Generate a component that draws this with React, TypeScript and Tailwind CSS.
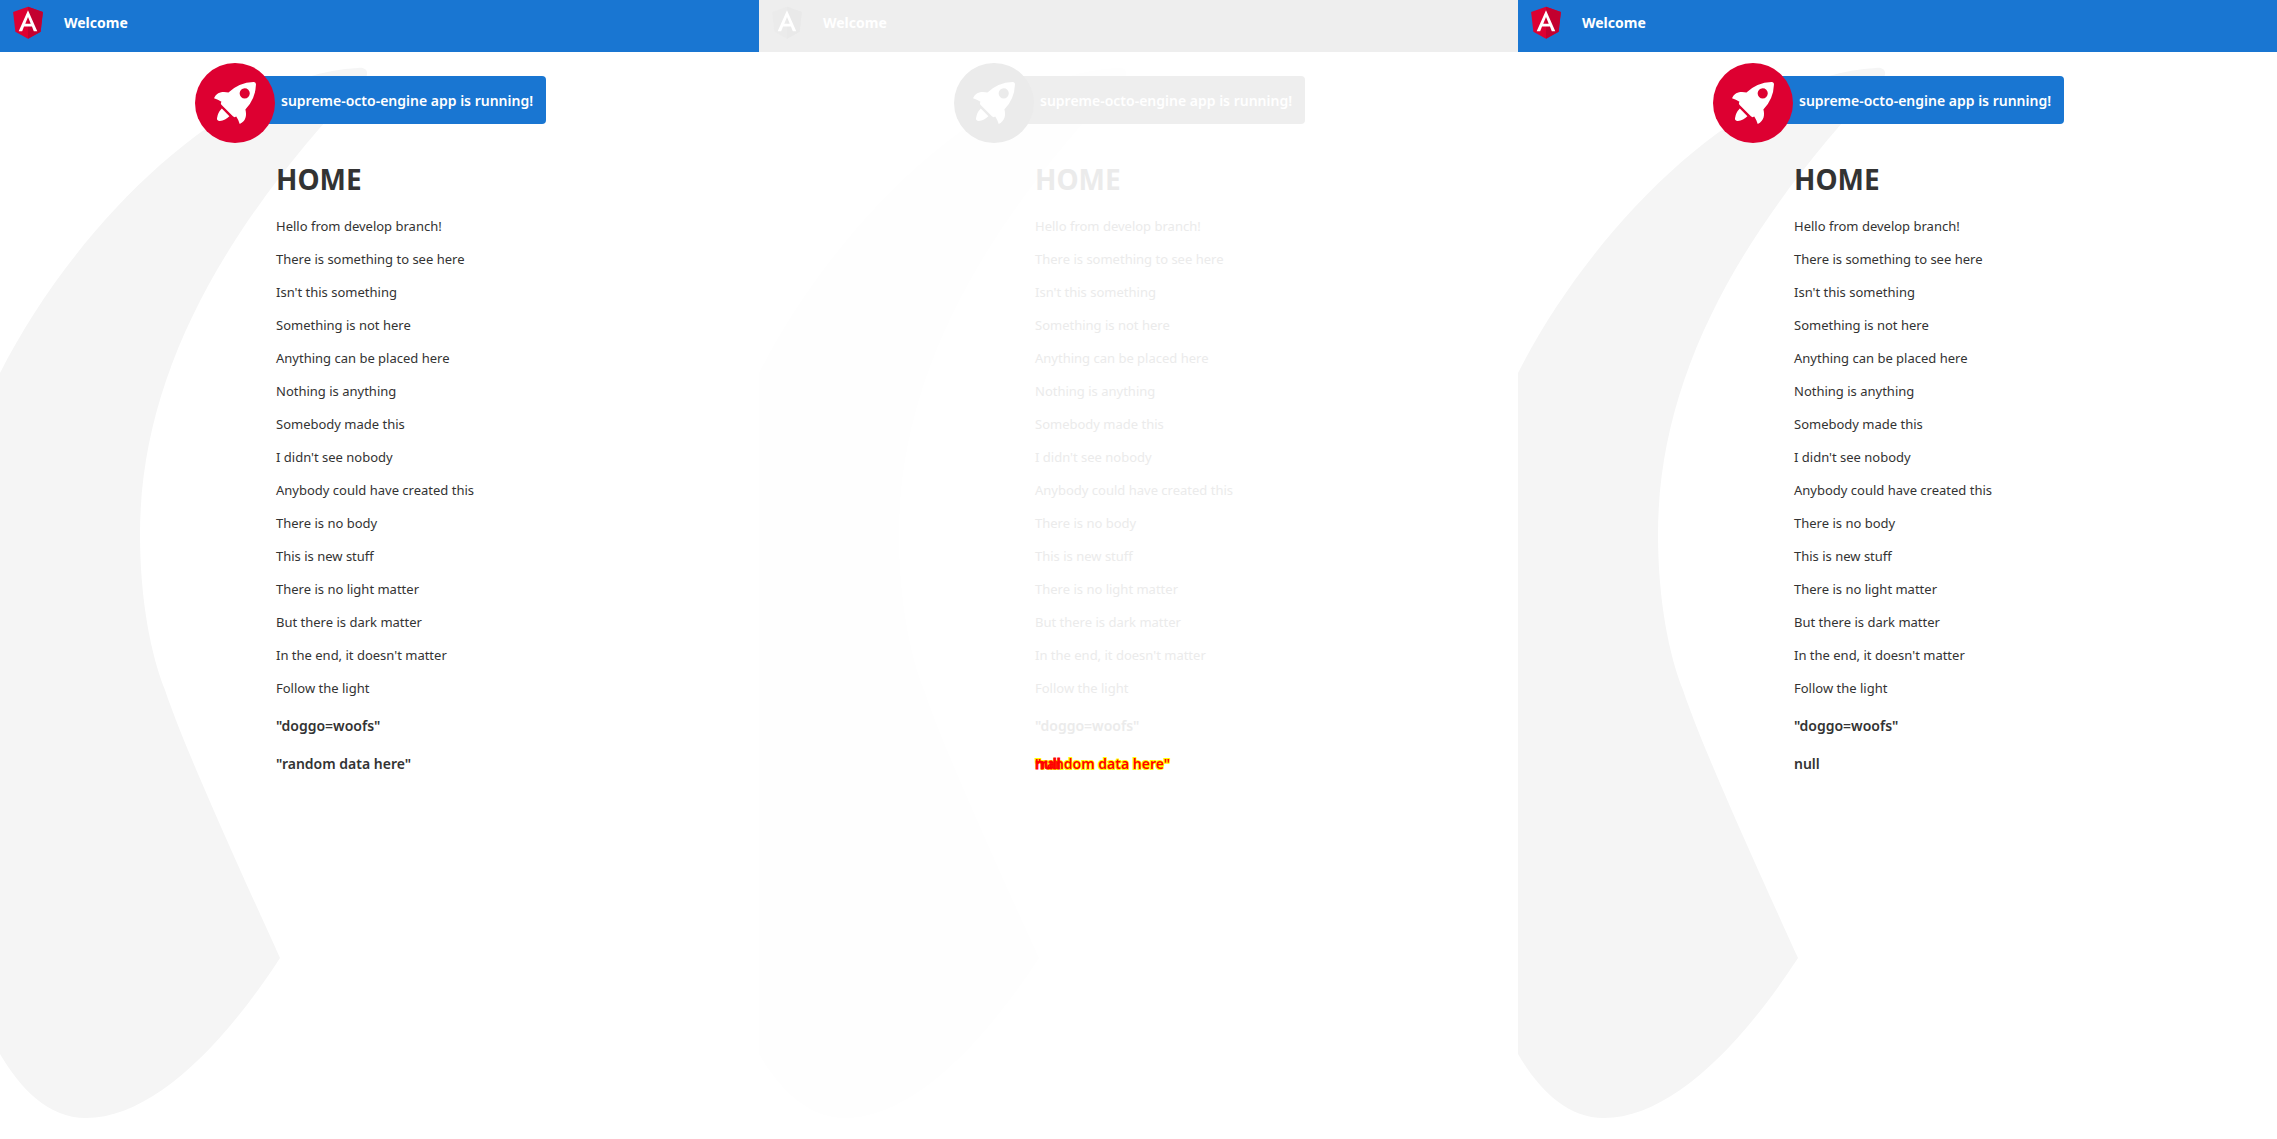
type Variant = "color" | "diff";

interface PanelProps {
  variant: Variant;
  lastValue?: string;
}

const lines = [
  "Hello from develop branch!",
  "There is something to see here",
  "Isn't this something",
  "Something is not here",
  "Anything can be placed here",
  "Nothing is anything",
  "Somebody made this",
  "I didn't see nobody",
  "Anybody could have created this",
  "There is no body",
  "This is new stuff",
  "There is no light matter",
  "But there is dark matter",
  "In the end, it doesn't matter",
  "Follow the light",
];

const palettes = {
  color: {
    bar: "bg-[#1976d2]",
    text: "text-[#333333]",
    smoke: "fill-[#f5f5f5]",
    circle: "fill-[#dd0031]",
    logoLeft: "fill-[#dd0031]",
    logoRight: "fill-[#c3002f]",
  },
  diff: {
    bar: "bg-[#eeeeee]",
    text: "text-[#ebebeb]",
    smoke: "fill-[#fefefe]",
    circle: "fill-[#ebebeb]",
    logoLeft: "fill-[#ebebeb]",
    logoRight: "fill-[#e9e9e9]",
  },
};

function Logo({ variant }: { variant: Variant }) {
  const p = palettes[variant];
  return (
    <svg viewBox="0 0 250 250" className="size-10" role="img" aria-label="Angular Logo">
      <path className={p.logoLeft} d="M125 30 31.9 63.2l14.2 123.1L125 230l78.9-43.7 14.2-123.1z" />
      <path className={p.logoRight} d="M125 30v200l78.9-43.7 14.2-123.1z" />
      <path
        fill="#fff"
        d="M125 52.1 66.8 182.6h21.7l11.7-29.2h49.4l11.7 29.2H183L125 52.1zm17 83.3h-34l17-40.9z"
      />
    </svg>
  );
}

function Rocket({ variant }: { variant: Variant }) {
  return (
    <svg viewBox="0 0 101.678 101.678" className="absolute -top-[13px] -left-[18px] size-20" aria-hidden="true">
      <circle cx="50.839" cy="50.839" r="50.839" className={palettes[variant].circle} />
      <g transform="translate(24.185 24.185)" fill="#fff">
        <path
          transform="translate(0.371 3.363)"
          d="M3.4,42.615a3.084,3.084,0,0,0,3.553,3.553,21.419,21.419,0,0,0,12.215-6.107L9.511,30.4A21.419,21.419,0,0,0,3.4,42.615Z"
        />
        <path d="M53.3,3.221A3.09,3.09,0,0,0,50.081,0,48.227,48.227,0,0,0,18.322,13.437c-6-1.666-14.991-1.221-18.322,7.218A33.892,33.892,0,0,1,9.439,25.1l-.333.666a3.013,3.013,0,0,0,.555,3.553L23.985,43.641a2.9,2.9,0,0,0,3.553.555l.666-.333A33.892,33.892,0,0,1,32.647,53.3c8.55-3.664,8.884-12.326,7.218-18.322A48.227,48.227,0,0,0,53.3,3.221ZM34.424,9.772a6.439,6.439,0,1,1,9.106,9.106,6.368,6.368,0,0,1-9.106,0A6.467,6.467,0,0,1,34.424,9.772Z" />
      </g>
    </svg>
  );
}

function Smoke({ variant }: { variant: Variant }) {
  return (
    <svg
      viewBox="0 0 370 1120"
      width="370"
      height="1120"
      className="pointer-events-none absolute top-0 left-0 -z-10"
      aria-hidden="true"
    >
      <path
        className={palettes[variant].smoke}
        d="M0 373C75 225 225 75 358 68C366 67 369 72 366 77C230 220 140 369 140 534C140 600 151 655 165 690C180 735 215 815 280 958C220 1050 150 1118 86 1118C48 1118 20 1088 0 1054Z"
      />
    </svg>
  );
}

function Panel({ variant, lastValue }: PanelProps) {
  const p = palettes[variant];
  return (
    <section className="relative isolate min-h-screen overflow-hidden">
      <Smoke variant={variant} />
      <header className={`flex h-[52px] items-start gap-4 px-2 pt-[2px] font-bold text-white ${p.bar}`}>
        <Logo variant={variant} />
        <span className="leading-[42px]">Welcome</span>
      </header>
      <main>
        <div
          className={`relative mx-auto mt-6 flex h-12 w-[333px] items-center rounded pl-[68px] font-semibold whitespace-nowrap text-white ${p.bar}`}
        >
          <Rocket variant={variant} />
          <span>supreme-octo-engine app is running!</span>
        </div>
        <div className={`mx-auto mt-9 w-[207px] whitespace-nowrap ${p.text}`}>
          <h1 className="text-[28px] leading-[38px] font-bold">HOME</h1>
          <div className="mt-[19px] flex flex-col gap-[14px] text-[13px]">
            {lines.map((line) => (
              <p key={line}>{line}</p>
            ))}
          </div>
          <div className="mt-[18px] flex flex-col gap-[19px] font-semibold">
            <p>"doggo=woofs"</p>
            {lastValue ? (
              <p>{lastValue}</p>
            ) : (
              <p className="relative text-[#ff0000] [-webkit-text-stroke:2px_#ffff00] [paint-order:stroke_fill]">
                "random data here"
                <span className="absolute top-0 left-0 [-webkit-text-stroke:1px_#ff0000]">null</span>
              </p>
            )}
          </div>
        </div>
      </main>
    </section>
  );
}

export default function App() {
  return (
    <div className="grid min-h-screen grid-cols-3 bg-white font-['Noto_Sans',sans-serif] text-[14px] leading-[19px]">
      <Panel variant="color" lastValue={'"random data here"'} />
      <Panel variant="diff" />
      <Panel variant="color" lastValue="null" />
    </div>
  );
}
